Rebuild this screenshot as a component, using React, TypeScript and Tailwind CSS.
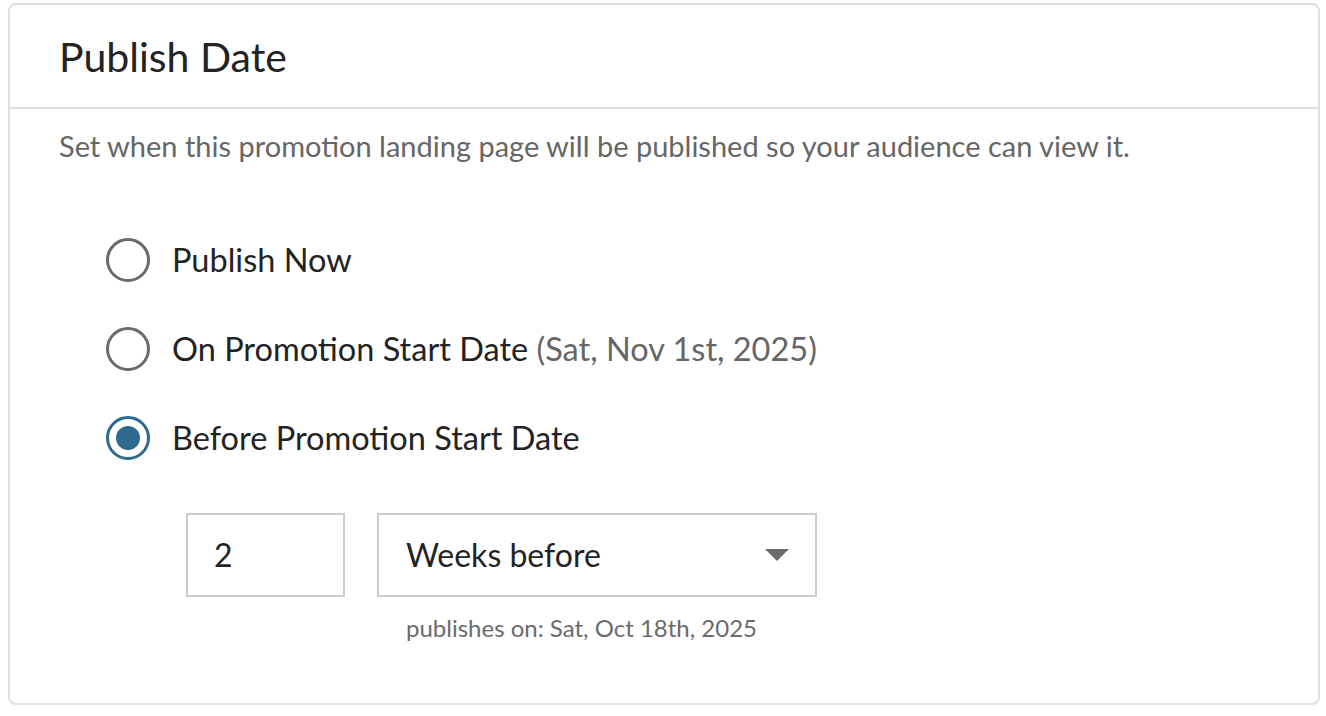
import { useState } from "react";

const options = [
  { id: "now", label: "Publish Now" },
  { id: "start", label: "On Promotion Start Date", note: "(Sat, Nov 1st, 2025)" },
  { id: "before", label: "Before Promotion Start Date" },
];

function Radio({ checked }: { checked: boolean }) {
  return checked ? (
    <span className="flex h-[44px] w-[44px] shrink-0 items-center justify-center rounded-full border-[3px] border-[#2d6a8e]">
      <span className="h-[24px] w-[24px] rounded-full bg-[#2d6a8e]" />
    </span>
  ) : (
    <span className="h-[44px] w-[44px] shrink-0 rounded-full border-[3px] border-[#6b6b6b]" />
  );
}

export default function App() {
  const [selected, setSelected] = useState("before");

  return (
    <div className="bg-white pt-[3px] pl-[8px] pr-[6px] font-['Lato',sans-serif] text-[#232323]">
      <div className="h-[702px] rounded-[8px] border-2 border-[#e0e0e0]">
        {/* header */}
        <div className="flex h-[104px] items-center border-b-2 border-[#e0e0e0] pl-[49px]">
          <h1 className="text-[41px] leading-none">Publish Date</h1>
        </div>

        <div className="pl-[49px] pt-[16px]">
          <p className="text-[29px] leading-[42px] text-[#666666]">
            Set when this promotion landing page will be published so your audience can view it.
          </p>

          <div className="mt-[71px] flex flex-col gap-[45px] pl-[47px]">
            {options.map((o) => (
              <label
                key={o.id}
                className="flex h-[44px] cursor-pointer items-center gap-[22px]"
                onClick={() => setSelected(o.id)}
              >
                <Radio checked={selected === o.id} />
                <span className="text-[32.5px]">
                  {o.label}
                  {o.note && <span className="text-[#666666]"> {o.note}</span>}
                </span>
              </label>
            ))}
          </div>

          <div className="mt-[53px] flex gap-[32px] pl-[127px]">
            <div className="flex h-[84px] w-[159px] items-center border-2 border-[#cccccc] px-[26px] text-[32px]">
              2
            </div>
            <div>
              <div className="flex h-[84px] w-[440px] items-center justify-between border-2 border-[#cccccc] pl-[27px] pr-[26px] text-[32px]">
                <span>Weeks before</span>
                <svg width="24" height="12" viewBox="0 0 24 12">
                  <path d="M0 0h24L12 12z" fill="#6b6b6b" />
                </svg>
              </div>
              <p className="mt-[13px] pl-[29px] text-[24px] text-[#6b6b6b]">
                publishes on: Sat, Oct 18th, 2025
              </p>
            </div>
          </div>
        </div>
      </div>
    </div>
  );
}
